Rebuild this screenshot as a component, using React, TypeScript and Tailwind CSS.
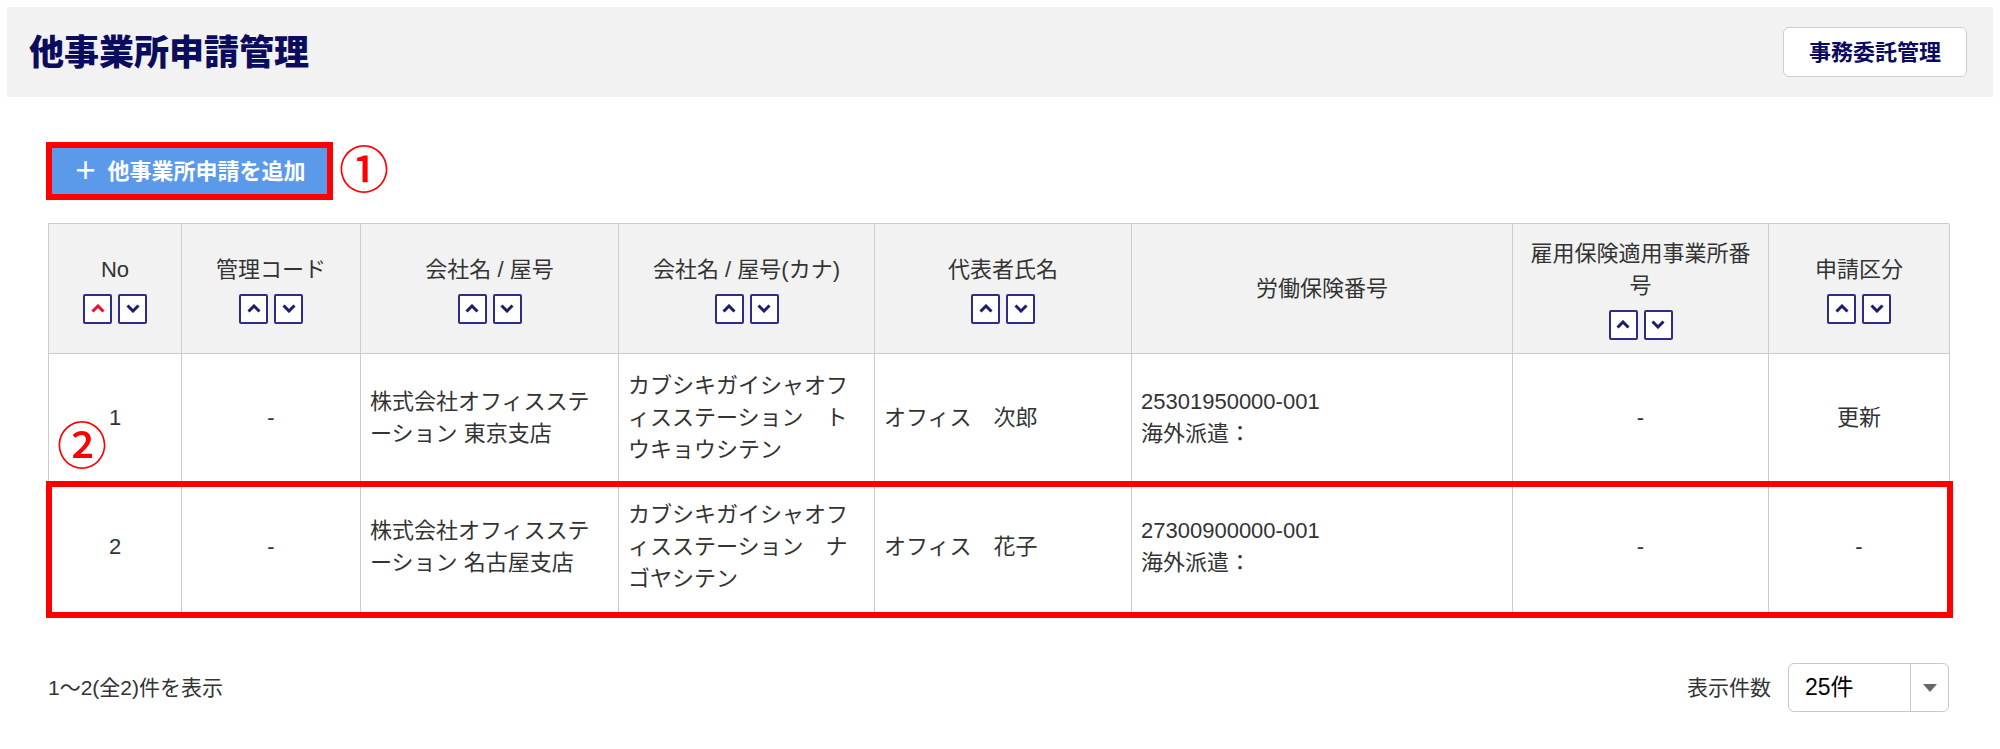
import React from 'react'

const font = { fontFamily: '"Liberation Sans", "Noto Sans CJK JP", sans-serif' }

const gridCols =
  'grid grid-cols-[133px_179px_258px_256px_257px_381px_256px_181px]'

type Row = {
  no: string
  code: string
  name: string
  kana: string
  rep: string
  labor: string[]
  employ: string
  kind: string
}

const rows: Row[] = [
  {
    no: '1',
    code: '-',
    name: '株式会社オフィスステーション 東京支店',
    kana: 'カブシキガイシャオフィスステーション　トウキョウシテン',
    rep: 'オフィス　次郎',
    labor: ['25301950000-001', '海外派遣：'],
    employ: '-',
    kind: '更新',
  },
  {
    no: '2',
    code: '-',
    name: '株式会社オフィスステーション 名古屋支店',
    kana: 'カブシキガイシャオフィスステーション　ナゴヤシテン',
    rep: 'オフィス　花子',
    labor: ['27300900000-001', '海外派遣：'],
    employ: '-',
    kind: '-',
  },
]

function Chevron({ up, red }: { up?: boolean; red?: boolean }) {
  return (
    <svg width="14" height="9" viewBox="0 0 14 9">
      <polyline
        points={up ? '1.5,7.5 7,2 12.5,7.5' : '1.5,1.5 7,7 12.5,1.5'}
        fill="none"
        stroke={red ? '#e8102a' : '#1c1c70'}
        strokeWidth="3"
      />
    </svg>
  )
}

function SortButtons({ activeUp }: { activeUp?: boolean }) {
  return (
    <div className="mt-2 flex gap-[6px]">
      <button className="flex h-[30px] w-[29px] items-center justify-center rounded-[2px] border-2 border-[#2d2d88] bg-white">
        <Chevron up red={activeUp} />
      </button>
      <button className="flex h-[30px] w-[29px] items-center justify-center rounded-[2px] border-2 border-[#2d2d88] bg-white">
        <Chevron />
      </button>
    </div>
  )
}

function HeadCell({ label, sort = true, activeUp }: { label: React.ReactNode; sort?: boolean; activeUp?: boolean }) {
  return (
    <div className="flex h-[130px] flex-col items-center justify-center border-r border-b border-[#cccccc] bg-[#f2f2f2] px-[9px] text-center leading-[32px]">
      <div>{label}</div>
      {sort && <SortButtons activeUp={activeUp} />}
    </div>
  )
}

function BodyRow({ row, height }: { row: Row; height: string }) {
  const cell = `flex items-center border-r border-b border-[#cccccc] px-[9px] leading-[32px] ${height}`
  return (
    <div className={gridCols}>
      <div className={`${cell} justify-center`}>{row.no}</div>
      <div className={`${cell} justify-center`}>{row.code}</div>
      <div className={cell}>{row.name}</div>
      <div className={cell}>{row.kana}</div>
      <div className={cell}>{row.rep}</div>
      <div className={cell}>
        <div>
          {row.labor.map((l) => (
            <div key={l}>{l}</div>
          ))}
        </div>
      </div>
      <div className={`${cell} justify-center`}>{row.employ}</div>
      <div className={`${cell} justify-center`}>{row.kind}</div>
    </div>
  )
}

export default function App() {
  return (
    <div className="min-h-screen bg-white text-[22px] text-[#333333]" style={font}>
      {/* page header */}
      <div className="px-[7px] pt-[7px]">
        <div className="flex h-[90px] items-center justify-between bg-[#f2f2f2] pr-[26px] pl-[22px]">
          <h1 className="text-[35px] leading-none font-black text-[#0c0c5e]">他事業所申請管理</h1>
          <button className="flex h-[50px] w-[184px] items-center justify-center rounded-[6px] border border-[#cfcfcf] bg-white text-[22px] font-bold text-[#0c0c5e]">
            事務委託管理
          </button>
        </div>
      </div>

      <div className="pr-[51px] pl-[48px]">
        {/* add button */}
        <div className="mt-[45px] flex items-center gap-[6px]">
          <div className="-ml-[2px] border-[6px] border-[#ff0000]">
            <button className="flex h-[46px] w-[275px] items-center justify-center bg-[#5b9aea] text-[22px] font-bold text-white">
              <span className="mr-[10px] text-[24px]">＋</span>
              他事業所申請を追加
            </button>
          </div>
          <span className="text-[50px] leading-none font-medium text-[#ff0000]">①</span>
        </div>

        {/* table */}
        <div className="mt-[23px] border-t border-l border-[#cccccc]">
          <div className={gridCols}>
            <HeadCell label="No" activeUp />
            <HeadCell label="管理コード" />
            <HeadCell label="会社名 / 屋号" />
            <HeadCell label="会社名 / 屋号(カナ)" />
            <HeadCell label="代表者氏名" />
            <HeadCell label="労働保険番号" sort={false} />
            <HeadCell label="雇用保険適用事業所番号" />
            <HeadCell label="申請区分" />
          </div>

          <div className="relative">
            <BodyRow row={rows[0]} height="h-[128px]" />
            <span className="absolute top-[68px] left-[8px] text-[50px] leading-none font-medium text-[#ff0000]">②</span>
          </div>

          <div className="relative">
            <BodyRow row={rows[1]} height="h-[131px]" />
            <div className="pointer-events-none absolute -top-[1px] -right-[4px] -bottom-[5px] -left-[3px] border-[6px] border-[#ff0000]" />
          </div>
        </div>

        {/* footer */}
        <div className="mt-[50px] flex items-center justify-between">
          <div className="text-[21px]">1～2(全2)件を表示</div>
          <div className="flex items-center gap-[17px]">
            <span className="text-[21px]">表示件数</span>
            <div className="flex h-[49px] w-[161px] items-stretch rounded-[6px] border border-[#c8c8c8] bg-white">
              <div className="flex flex-1 items-center pl-[16px] text-[23px] text-black">25件</div>
              <div className="flex w-[38px] items-center justify-center border-l border-[#c8c8c8]">
                <svg width="14" height="8" viewBox="0 0 14 8">
                  <polygon points="0,0 14,0 7,8" fill="#666666" />
                </svg>
              </div>
            </div>
          </div>
        </div>
      </div>
    </div>
  )
}
